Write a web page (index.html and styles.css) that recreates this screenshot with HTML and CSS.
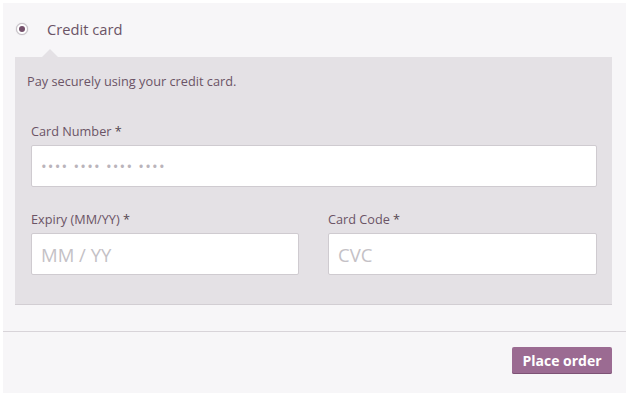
FILE: index.html
```html
<!DOCTYPE html>
<html>
<head>
<meta charset="utf-8">
<link rel="stylesheet" href="styles.css">
</head>
<body>
<div class="payment">
  <div class="method">
    <span class="radio"><span class="dot"></span></span>
    <span class="method-label">Credit card</span>
  </div>
  <div class="box">
    <p class="desc">Pay securely using your credit card.</p>
    <div class="field full">
      <label class="label">Card Number <span class="req">*</span></label>
      <div class="input dots">&#8226;&#8226;&#8226;&#8226; &#8226;&#8226;&#8226;&#8226; &#8226;&#8226;&#8226;&#8226; &#8226;&#8226;&#8226;&#8226;</div>
    </div>
    <div class="row">
      <div class="field">
        <label class="label">Expiry (MM/YY) <span class="req">*</span></label>
        <div class="input ph">MM / YY</div>
      </div>
      <div class="field">
        <label class="label">Card Code <span class="req">*</span></label>
        <div class="input ph">CVC</div>
      </div>
    </div>
  </div>
  <div class="actions">
    <button class="btn">Place order</button>
  </div>
</div>
</body>
</html>
```
FILE: styles.css
```css
html, body {
  margin: 0;
  padding: 0;
  background: #ffffff;
}
body {
  font-family: "Open Sans", "Liberation Sans", sans-serif;
}
.payment {
  margin: 3px;
  width: 623px;
  height: 390px;
  background: #f7f6f8;
  display: flex;
  flex-direction: column;
}
.method {
  height: 54px;
  display: flex;
  align-items: center;
  padding-left: 13px;
  box-sizing: border-box;
  padding-bottom: 2px;
}
.radio {
  width: 12px;
  height: 12px;
  border-radius: 50%;
  background: #ffffff;
  border: 1px solid #c6c1c7;
  box-sizing: border-box;
  display: flex;
  align-items: center;
  justify-content: center;
  box-shadow: 0 0 1px #bdb7be;
}
.dot {
  width: 6px;
  height: 6px;
  border-radius: 50%;
  background: #74506b;
}
.method-label {
  margin-left: 19px;
  font-size: 14.7px;
  color: #6b5466;
}
.box {
  position: relative;
  margin-left: 12px;
  width: 597px;
  height: 247px;
  box-sizing: border-box;
  padding: 14px 15px 0 16px;
  background: #e4e1e5;
  box-shadow: 0 1px 0 #d2ced3;
}
.box::before {
  content: "";
  position: absolute;
  top: -8px;
  left: 27px;
  border-left: 8px solid transparent;
  border-right: 8px solid transparent;
  border-bottom: 8px solid #e4e1e5;
}
.desc {
  margin: 0 0 30px -4px;
  font-size: 12.75px;
  line-height: 20px;
  color: #6b5466;
}
.field {
  display: flex;
  flex-direction: column;
}
.label {
  font-size: 12.7px;
  line-height: 20px;
  color: #6b5466;
  margin-bottom: 4px;
}
.req {
  color: #54464f;
}
.input {
  height: 42px;
  box-sizing: border-box;
  background: #ffffff;
  border: 1px solid #cfcbd0;
  border-radius: 2px;
  display: flex;
  align-items: center;
  padding-left: 9px;
}
.ph {
  font-size: 18.5px;
  color: #c4c1c6;
}
.dots {
  font-size: 15px;
  letter-spacing: 1.2px;
  color: #bab4bb;
}
.row {
  margin-top: 22px;
  display: grid;
  grid-template-columns: 268px 269px;
  column-gap: 29px;
}
.actions {
  margin-top: 27px;
  border-top: 1px solid #d8d4d9;
  display: flex;
  justify-content: flex-end;
  padding: 15px 14px 0 0;
}
.btn {
  width: 100px;
  height: 27px;
  border: none;
  border-radius: 2px;
  background: #9b6b92;
  color: #ffffff;
  font-family: "Open Sans", "Liberation Sans", sans-serif;
  font-weight: 700;
  font-size: 14px;
  padding: 0;
  box-shadow: inset 0 -1px 0 #7d5275;
}
```
